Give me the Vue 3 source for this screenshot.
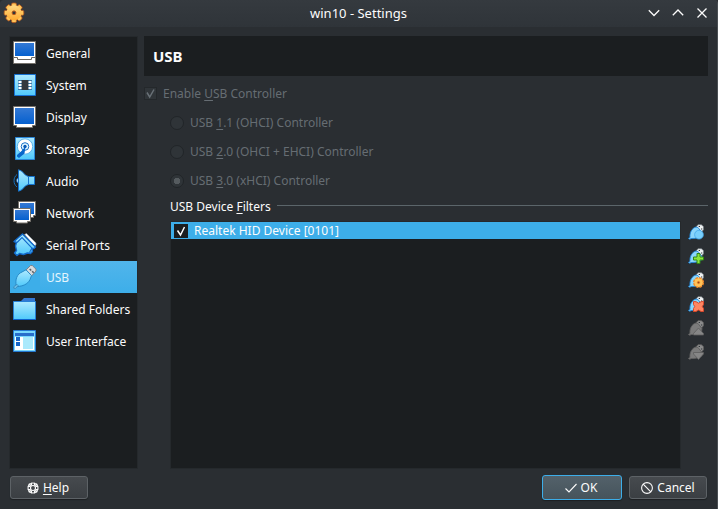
<script setup>
import { ref } from 'vue'

const pages = ['General', 'System', 'Display', 'Storage', 'Audio', 'Network', 'Serial Ports', 'USB', 'Shared Folders', 'User Interface']
const current = ref('USB')
const controllers = [
  { key: '1', rest: '.1 (OHCI) Controller', on: false },
  { key: '2', rest: '.0 (OHCI + EHCI) Controller', on: false },
  { key: '3', rest: '.0 (xHCI) Controller', on: true },
]
const tools = ['new', 'add', 'edit', 'remove', 'up', 'down']
</script>

<template>
  <div class="window">
    <svg class="defs" width="0" height="0" aria-hidden="true">
      <defs>
        <linearGradient id="screen" x1="0" y1="0" x2="0" y2="1"><stop offset="0" stop-color="#3479d4" /><stop offset="1" stop-color="#0560cf" /></linearGradient>
        <linearGradient id="sky" x1="0" y1="0" x2="0" y2="1"><stop offset="0" stop-color="#aeeaff" /><stop offset="1" stop-color="#4fc9fb" /></linearGradient>
        <linearGradient id="gold" x1="0" y1="0" x2="0" y2="22" gradientUnits="userSpaceOnUse"><stop offset="0" stop-color="#ffe595" /><stop offset="1" stop-color="#ff9d1c" /></linearGradient>
      </defs>
    </svg>
    <header class="titlebar">
      <svg class="gear" width="22" height="22" viewBox="0 0 22 22">
        <g fill="#ffc65a" stroke="#b4551c" stroke-width=".8">
          <rect v-for="n in 8" :key="n" x="8.600" y="1" width="4.800" height="6" rx="1.300" :transform="`rotate(${n * 45} 11 10.800)`" />
        </g>
        <circle cx="11" cy="10.800" r="7.500" fill="url(#gold)" />
        <circle cx="11" cy="10.800" r="1.900" fill="#31363b" stroke="#b4551c" />
      </svg>
      <h1>win10 - Settings</h1>
      <div class="controls">
        <svg width="12" height="12" viewBox="0 0 12 12"><path d="M.8 3.300 6 8.500l5.200-5.200" /></svg>
        <svg width="12" height="12" viewBox="0 0 12 12"><path d="M.8 8.200 6 3l5.200 5.200" /></svg>
        <svg width="12" height="12" viewBox="0 0 12 12"><path d="m1.500 1.500 9 9m0-9-9 9" /></svg>
      </div>
    </header>

    <div class="body">
      <nav class="sidebar">
        <div v-for="p in pages" :key="p" class="page" :class="{ active: p === current }" @click="current = p">
          <svg width="24" height="24" viewBox="0 0 24 24">
            <template v-if="p === 'General'">
              <path d="M.5.5h22v22H.5z" fill="#fff" stroke="#75716b" />
              <path d="M2 2h19v13H2z" fill="url(#screen)" />
              <path d="M1 16.500h3.500v2h14v-2H22" fill="none" stroke="#6d6963" />
            </template>
            <template v-else-if="p === 'System'">
              <path d="M1.500 1.500h21v21h-21z" fill="url(#sky)" stroke="#1771d1" />
              <path d="M5 7h14v10H5z" fill="#3d7daf" />
              <path d="M8.500 7h7v10h-7z" fill="#33383e" />
              <path d="M5.500 8h3v2h-3zm0 3h3v2h-3zm0 3h3v2h-3zm10-6h3v2h-3zm0 3h3v2h-3zm0 3h3v2h-3z" fill="#fff" />
            </template>
            <template v-else-if="p === 'Display'">
              <path d="M.5 1.500h22v19h-3v2h-16v-2h-3z" fill="#fff" stroke="#75716b" />
              <path d="M2 3h19v16H2z" fill="url(#screen)" />
            </template>
            <template v-else-if="p === 'Storage'">
              <path d="M2.500.5h19v22h-19z" fill="url(#sky)" stroke="#2a86d8" />
              <circle cx="12" cy="9.500" r="7.700" fill="#fff" stroke="#5fb4ea" />
              <circle cx="12" cy="9.500" r="3.800" fill="#e4f7fe" stroke="#1a73cb" />
              <path d="m12.500 9.500-1 7-5.500 4.500-2-1.500v-1.500l4-3.500z" fill="#0867cb" />
              <circle cx="12" cy="9.500" r="1.700" fill="#0b5bb7" />
            </template>
            <template v-else-if="p === 'Audio'">
              <path d="M4 5.500C0 8.500 0 15 4 18" fill="none" stroke="#176fba" />
              <path d="M6 8.500c-3 1-3 5 0 6z" fill="#dff8ff" stroke="#196cc0" />
              <path d="M5.500.8c5 .7 5.500 6.200 10 6.700h6v8h-6c-4.500.5-5 6-10 6.700z" fill="url(#sky)" stroke="#1572cf" />
              <path d="M15.500 8v7" stroke="#1572cf" />
            </template>
            <template v-else-if="p === 'Network'">
              <path d="M5.500.5h17v14h-2v2h-12v-2h-3z" fill="#fff" stroke="#75716b" />
              <path d="M7 2h14v11H7z" fill="url(#screen)" />
              <path d="M.5 7.500h17v13h-3v1.500h-11v-1.500h-3z" fill="#fff" stroke="#75716b" />
              <path d="M2 9h14v10H2z" fill="url(#screen)" />
            </template>
            <template v-else-if="p === 'Serial Ports'">
              <path d="m11.500 1.500 2-1L23 10v2l-1.500 1z" fill="#fff" stroke="#8c969d" stroke-width=".7" />
              <path d="m9.500 1 13 13-1.500 1.500-2 0 .5 3-2 2-3-.5-4 1.500-4-1L4 22.500 1.500 20l2-2.500-1-4.500L3.500 9.500 1 8.500z" fill="url(#sky)" stroke="#1269ca" stroke-width="1.400" stroke-linejoin="round" />
              <path d="M4 9.500 9 4.500l10 10.500-2.500 4.500" stroke="#1269ca" stroke-width="1.100" fill="none" />
            </template>
            <template v-else-if="p === 'USB'">
              <path d="m13 5 4.500-4.500h1.800l3.700 3.700v1.800L18.500 11z" fill="#d5dbde" stroke="#7b858c" />
              <path d="m16.700 4 1.500 1.500M19.200 6.300l1.500 1.500" stroke="#555d63" stroke-width="1.600" />
              <path d="M3.200 20.500C2 14.500 4 9 9 7l4-2.200 5.500 5.800-1.500 4c-2.500 5-7.500 6.500-12.500 7z" fill="url(#sky)" stroke="#278bc9" />
              <path d="M.8 23.200v-1.500l3.200-2.400 1.200 1.400-2.700 2.800z" fill="#68bde9" stroke="#3989b9" stroke-width=".8" />
            </template>
            <template v-else-if="p === 'Shared Folders'">
              <path d="M8.500 5V3.500L11 1h11v4z" fill="#3478d1" />
              <path d="M.5 4.500h22v18H.5z" fill="url(#sky)" stroke="#2680d6" />
              <path d="M0 22.500h23" stroke="#0c61cd" />
            </template>
            <template v-else>
              <path d="M.5 1.500h22v21H.5z" fill="#79d7fc" stroke="#2478d1" />
              <path d="M2 4h19v3H2z" fill="#286dcb" />
              <path d="M2 8h19v13H2z" fill="#fff" />
              <path d="M3 8h4v4H3zm0 5h4v4H3z" fill="#1765c7" />
              <path d="M10 8h10v12H10z" fill="#a9e9fc" />
            </template>
          </svg>
          <span>{{ p }}</span>
        </div>
      </nav>

      <main>
        <h2>USB</h2>
        <label class="enable disabled">
          <i class="check"><svg width="11" height="11" viewBox="0 0 11 11"><path d="m2 4.500 2.700 4.500L9 1.500" /></svg></i>
          <span>Enable <u>U</u>SB Controller</span>
        </label>
        <div class="details">
          <label v-for="c in controllers" :key="c.key" class="option disabled">
            <i class="radio" :class="{ on: c.on }"></i>
            <span>USB <u>{{ c.key }}</u>{{ c.rest }}</span>
          </label>
          <div class="legend"><span>USB Device <u>F</u>ilters</span><hr></div>
          <div class="filters">
            <div class="list">
              <div class="filter">
                <i class="check"><svg width="14" height="14" viewBox="0 0 14 14"><path d="m3.500 6.500 3 4.500 4-8" /></svg></i>
                <span>Realtek HID Device [0101]</span>
              </div>
            </div>
            <div class="tools">
              <svg v-for="t in tools" :key="t" width="16" height="16" viewBox="0 0 16 16">
                <g :class="{ gray: t === 'up' || t === 'down' }">
                  <path class="plug" d="m8 3 2-2.300h3.500l2 2v3L13.500 8z" />
                  <path class="cable" d="M2 13.500C1.500 8.500 4 4 8 3l2 .5 4 5-.5 3.500c-3 2-6 2.500-10 2.500l-2 .8-1-1z" />
                  <path class="hole" d="M10.700 2.500H12m1 2.500h1.300" />
                </g>
                <circle v-if="t === 'new'" cx="11" cy="10.700" r="4.400" fill="#79cffc" stroke="#3fa3e8" stroke-width=".7" />
                <path v-else-if="t === 'add'" d="M9 5.500h3v3.500h3.500v3H12v3.500H9V12H5.500V9H9z" fill="#8be43c" stroke="#338813" />
                <g v-else-if="t === 'edit'">
                  <circle cx="10.500" cy="10.500" r="4.700" fill="#ffc257" stroke="#f08a2c" stroke-width="1.700" stroke-dasharray="2.600 1.090" />
                  <circle cx="10.500" cy="10.500" r="4" fill="#ffc257" />
                  <circle cx="10.500" cy="10.500" r="1.100" fill="#8e4a1d" stroke="#e87121" stroke-width=".7" />
                </g>
                <path v-else-if="t === 'remove'" d="m5.500 5.500 2.500.2 2.500 1.500 2.500-1.500 2.500-.2v3l-1.200 2 1.200 2v3H13l-2.500-1.500L8 15.500H5.500v-3l1.200-2-1.200-2z" fill="#ff8661" stroke="#d9482c" />
                <path v-else-if="t === 'up'" d="m10.500 8 5 5.500v1.500H5.500v-1.500z" fill="#868686" stroke="#5e5e5e" stroke-width=".8" />
                <path v-else d="M5.500 8.500h10V10l-5 5.500-5-5.500z" fill="#868686" stroke="#5e5e5e" stroke-width=".8" />
              </svg>
            </div>
          </div>
        </div>
      </main>
    </div>

    <footer>
      <button class="help">
        <svg width="12" height="12" viewBox="0 0 12 12">
          <circle cx="6" cy="6" r="5" /><circle cx="6" cy="6" r="2.500" />
          <path d="M4.500.8v2.700M7.500.8v2.700M4.500 8.500v2.700m3-2.700v2.700M.8 4.500h2.700M.8 7.500h2.700m5-3h2.700m-2.700 3h2.700" />
          <path d="m1.800 1.800 2 2m4.400 4.400 2 2m0-8.400-2 2M3.800 8.200l-2 2" stroke-width="1.600" />
        </svg>
        <span><u>H</u>elp</span>
      </button>
      <button class="ok">
        <svg width="12" height="12" viewBox="0 0 12 12"><path d="m.5 6.500 3.500 3.500 7.500-8" /></svg>
        <span>OK</span>
      </button>
      <button class="cancel">
        <svg width="12" height="12" viewBox="0 0 12 12"><circle cx="6" cy="6" r="5.400" /><path d="m2.200 2.200 7.600 7.600" /></svg>
        <span>Cancel</span>
      </button>
    </footer>
  </div>
</template>

<style>
body { margin: 0; background: #2a2e32; }
</style>

<style scoped>
* { box-sizing: border-box; }
.window { display: flex; flex-direction: column; width: 718px; height: 509px; background: #2a2e32; border-right: 1px solid #4a4f53; border-radius: 4px 4px 0 0; color: #fcfcfc; font: 12px/16px "Noto Sans", sans-serif; overflow: hidden; }
.defs { position: absolute; }
svg { flex: none; display: block; }
u { text-decoration: underline; text-underline-offset: 2px; text-decoration-thickness: 1px; text-decoration-skip-ink: none; }
.titlebar { display: grid; grid-template-columns: 100px 1fr 100px; align-items: center; height: 27px; flex: none; background: linear-gradient(#353a3f, #2f3439); }
.gear { margin: 0 0 1px 3px; }
h1 { margin: 0; padding-bottom: 2px; font-size: 13px; line-height: 16px; font-weight: 400; text-align: center; }
.controls { display: flex; justify-content: flex-end; gap: 12px; padding: 0 9px 1px 0; }
.controls path { fill: none; stroke: #fcfcfc; stroke-width: 1.300; }
.body { display: flex; gap: 6px; padding: 9px 9px 0; height: 442px; flex: none; }
.sidebar { width: 129px; flex: none; height: 433px; border: 1px solid #25292c; background: #1b1e20; }
.page { display: flex; align-items: center; gap: 9px; height: 32px; padding-left: 3px; white-space: nowrap; }
.page span { padding-top: 2px; }
.page.active { background: linear-gradient(90deg, #3daee9 0 30px, transparent 30px), linear-gradient(#51b5eb, #3daee9); color: #e4f5fd; }
main { flex: 1; min-width: 0; display: flex; flex-direction: column; }
h2 { margin: 0; height: 40px; line-height: 41px; padding-left: 9px; font-size: 15px; font-weight: 700; background: #1b1e20; flex: none; }
.disabled { color: #666d73; }
.enable { display: flex; align-items: center; gap: 6px; height: 34px; }
.enable span { padding-top: 2px; }
.check { display: flex; align-items: center; justify-content: center; width: 13px; height: 13px; border: 1px solid #24282b; background: #303539; flex: none; }
.check path { fill: none; stroke: #687076; stroke-width: 1.500; }
.details { display: flex; flex-direction: column; flex: 1; padding-left: 26px; margin-top: -2px; }
.option { display: flex; align-items: center; gap: 6px; height: 29px; }
.radio { width: 14px; height: 14px; border: 1px solid #212528; border-radius: 50%; background: #2f3438; }
.radio.on { background: radial-gradient(circle, #555b5f 0 3px, #2f3438 3.500px); }
.legend { display: flex; align-items: center; gap: 6px; height: 26px; padding-bottom: 3px; }
.legend hr { flex: 1; margin: 0 0 2px; border: 0; height: 1px; background: #5b656a; }
.filters { display: flex; gap: 7px; flex: 1; }
.list { width: 511px; border: 1px solid #25292c; background: #1b1e20; }
.filter { display: flex; align-items: center; gap: 6px; height: 17px; padding-left: 3px; background: #3daee9; }
.filter .check { width: 14px; height: 14px; border: 0; background: #1b1e20; }
.filter .check path { stroke: #fcfcfc; stroke-width: 1.500; }
.tools { display: flex; flex-direction: column; gap: 8px; padding-top: 3px; }
.plug { fill: #eef1f2; stroke: #737c82; stroke-width: .8; }
.cable { fill: #8bd5fb; stroke: #1f85d8; stroke-width: .9; }
.hole { stroke: #31373b; stroke-width: 1.200; }
.gray .plug { fill: #8b8b8b; stroke: #5d5d5d; }
.gray .cable { fill: #7b7b7b; stroke: #606060; }
footer { display: flex; align-items: center; gap: 7px; height: 37px; padding: 0 10px; }
button { display: flex; align-items: center; justify-content: center; gap: 4px; width: 78px; height: 23px; padding: 0; font: inherit; color: #fcfcfc; background: linear-gradient(#464a4e, #3b3f43); border: 1px solid #5d6266; border-radius: 3px; box-shadow: 0 1px 1px #1d2022; }
button svg { fill: none; stroke: #fcfcfc; stroke-width: 1.100; }
.help { padding-right: 2px; }
.ok { margin-left: auto; width: 80px; height: 25px; padding-right: 2px; border-color: #3daee9; background: linear-gradient(#53616a, #46545c); }
</style>
